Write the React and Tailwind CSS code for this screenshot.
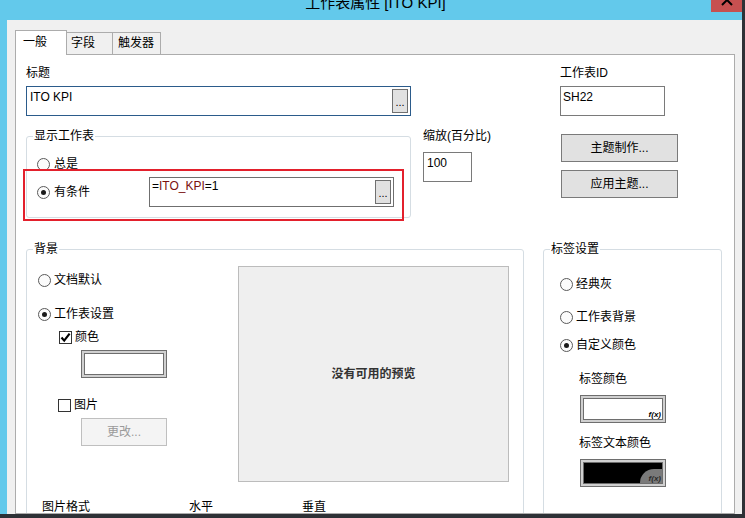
import React from 'react';

const Radio = ({ checked }) => (
  <span className="w-[13px] h-[13px] rounded-full border border-[#5a5a5a] bg-[#fbfbfb] flex items-center justify-center shrink-0">
    {checked && <span className="w-[5px] h-[5px] rounded-full bg-[#1a1a1a]" />}
  </span>
);

const Check = ({ checked }) => (
  <span className="w-[13px] h-[13px] border border-[#333333] bg-white flex items-center justify-center shrink-0">
    {checked && (
      <svg width="11" height="11" viewBox="0 0 11 11">
        <path d="M1.5 5.5 L4.2 8.6 L9.6 1.6" stroke="#000" strokeWidth="2.2" fill="none" />
      </svg>
    )}
  </span>
);

const Dots = ({ className = '' }) => (
  <span className={'w-[16px] h-[24px] bg-[#e1e1e1] border border-[#707070] flex items-end justify-center text-[11px] leading-[14px] pb-[3px] shrink-0 ' + className}>
    ...
  </span>
);

const ColorBox = ({ black, fx }) => (
  <div className="w-[86px] h-[28px] border border-[#6e6e6e] bg-[#d0d0d0] p-[2px]">
    <div className={black ? 'w-full h-full border border-[#6e6e6e] bg-black relative overflow-hidden' : 'w-full h-full border border-[#6e6e6e] bg-white relative overflow-hidden'}>
      {black && <span className="absolute right-0 bottom-0 w-[22px] h-[14px] rounded-tl-[14px] bg-[#7a7a7a]" />}
      {fx && (
        <span className={black ? 'absolute right-[1px] bottom-[-1px] text-[8px] leading-[10px] italic font-bold text-[#2a2a2a]' : 'absolute right-[1px] bottom-[-1px] text-[8px] leading-[10px] italic font-bold text-black'}>f(x)</span>
      )}
    </div>
  </div>
);

export default function App() {
  return (
    <div className="w-[745px] h-[518px] overflow-hidden bg-[#2e3136] font-['Liberation_Sans','Noto_Sans_CJK_SC',sans-serif] text-[12px] leading-[16px] text-black">
      <div className="w-[742px] h-[514px] bg-[#63c9eb] flex flex-col">
        {/* title bar */}
        <div className="h-[20px] flex shrink-0 overflow-hidden">
          <div className="flex-1 flex justify-center pl-[40px]">
            <span className="text-[15px] leading-[20px] -mt-[7px] whitespace-nowrap text-black">工作表属性 [ITO KPI]</span>
          </div>
          <div className="w-[31px] h-[12px] bg-[#c75050] flex justify-center">
            <svg width="14" height="12" viewBox="0 0 14 12">
              <path d="M2 -5 L12 5 M12 -5 L2 5" stroke="#000" strokeWidth="2" fill="none" />
            </svg>
          </div>
        </div>
        {/* body */}
        <div className="flex-1 ml-[7px] bg-[#f0f0f0] pt-[10px] pl-[8px] pr-[7px] flex flex-col overflow-hidden">
          {/* tabs */}
          <div className="flex items-end h-[25px] relative z-10 -mb-px shrink-0">
            <div className="w-[52px] h-[25px] bg-white border border-[#acacac] border-b-0 pl-[7px] pt-[3px]">一般</div>
            <div className="w-[46px] h-[23px] border-t border-r border-b border-[#acacac] pl-[4px] pt-[2px]">字段</div>
            <div className="w-[48px] h-[23px] border-t border-r border-b border-[#acacac] pl-[5px] pt-[2px]">触发器</div>
          </div>
          {/* panel */}
          <div className="flex-1 relative bg-white border border-[#acacac] overflow-hidden">
            {/* top row */}
            <div className="flex pl-[10px] pt-[10px]">
              <div className="w-[386px] flex flex-col">
                <div>标题</div>
                <div className="mt-[5px] w-[385px] h-[30px] border border-[#2b5b8b] flex items-start justify-between pl-[3px] pr-[2px] pt-[2px]">
                  <span>ITO KPI</span>
                  <Dots />
                </div>
                <fieldset className="mt-[12px] w-[385px] border border-[#d5dde3] rounded-[3px] pb-[10px]">
                  <legend className="ml-[6px] px-[1px]">显示工作表</legend>
                  <div className="mt-[12px] pl-[10px] flex items-center gap-[4px] h-[16px]">
                    <Radio />
                    <span>总是</span>
                  </div>
                  <div className="mt-[5px] pl-[10px] flex items-center">
                    <div className="w-[112px] flex items-center gap-[4px]">
                      <Radio checked />
                      <span>有条件</span>
                    </div>
                    <div className="w-[245px] h-[30px] border border-[#6f6f6f] flex items-start justify-between pl-[2px] pr-[2px]">
                      <span>
                        =<span className="text-[#7a1010]">ITO_KPI</span>=1
                      </span>
                      <Dots className="mt-[2px]" />
                    </div>
                  </div>
                </fieldset>
              </div>
              <div className="ml-[11px] w-[137px] mt-[63px] flex flex-col items-start">
                <div>缩放(百分比)</div>
                <div className="mt-[8px] w-[49px] h-[30px] border border-[#7a7a7a] pl-[3px] pt-[2px]">100</div>
              </div>
              <div className="flex flex-col items-start">
                <div>工作表ID</div>
                <div className="mt-[5px] w-[105px] h-[30px] border border-[#7a7a7a] pl-[2px] pt-[2px]">SH22</div>
                <div className="mt-[18px] ml-[1px] w-[117px] h-[28px] bg-[#e1e1e1] border border-[#7a7a7a] flex items-center justify-center">主题制作...</div>
                <div className="mt-[8px] ml-[1px] w-[117px] h-[28px] bg-[#e1e1e1] border border-[#7a7a7a] flex items-center justify-center">应用主题...</div>
              </div>
            </div>

            {/* bottom row */}
            <div className="flex pl-[10px] mt-[23px]">
              <fieldset className="w-[498px] h-[300px] border border-[#d5dde3] rounded-[3px]">
                <legend className="ml-[6px] px-[1px]">背景</legend>
                <div className="flex">
                  <div className="w-[211px] flex flex-col items-start">
                    <div className="mt-[15px] pl-[11px] flex items-center gap-[3px] h-[16px]">
                      <Radio />
                      <span>文档默认</span>
                    </div>
                    <div className="mt-[18px] pl-[11px] flex items-center gap-[3px] h-[16px]">
                      <Radio checked />
                      <span>工作表设置</span>
                    </div>
                    <div className="mt-[7px] pl-[32px] flex items-center gap-[3px] h-[16px]">
                      <Check checked />
                      <span>颜色</span>
                    </div>
                    <div className="mt-[5px] ml-[54px]">
                      <ColorBox />
                    </div>
                    <div className="mt-[19px] pl-[31px] flex items-center gap-[3px] h-[16px]">
                      <Check />
                      <span>图片</span>
                    </div>
                    <div className="mt-[5px] ml-[54px] w-[86px] h-[28px] bg-[#f4f4f4] border border-[#bfbfbf] text-[#9a9a9a] flex items-center justify-center">更改...</div>
                  </div>
                  <div className="mt-[9px] w-[271px] h-[216px] bg-[#efefef] border border-[#bcbcbc] flex items-center justify-center font-bold text-[#333333]">没有可用的预览</div>
                </div>
                <div className="mt-[17px] flex pl-[15px]">
                  <span className="w-[147px]">图片格式</span>
                  <span className="w-[113px]">水平</span>
                  <span>垂直</span>
                </div>
              </fieldset>
              <fieldset className="ml-[19px] w-[179px] h-[300px] border border-[#d5dde3] rounded-[3px]">
                <legend className="ml-[6px] px-[1px]">标签设置</legend>
                <div className="flex flex-col items-start">
                  <div className="mt-[19px] pl-[16px] flex items-center gap-[3px] h-[16px]">
                    <Radio />
                    <span>经典灰</span>
                  </div>
                  <div className="mt-[17px] pl-[16px] flex items-center gap-[3px] h-[16px]">
                    <Radio />
                    <span>工作表背景</span>
                  </div>
                  <div className="mt-[12px] pl-[16px] flex items-center gap-[3px] h-[16px]">
                    <Radio checked />
                    <span>自定义颜色</span>
                  </div>
                  <div className="mt-[18px] pl-[35px]">标签颜色</div>
                  <div className="mt-[8px] ml-[36px]">
                    <ColorBox fx />
                  </div>
                  <div className="mt-[12px] pl-[35px]">标签文本颜色</div>
                  <div className="mt-[8px] ml-[36px]">
                    <ColorBox black fx />
                  </div>
                </div>
              </fieldset>
            </div>

            {/* red highlight annotation */}
            <div className="absolute left-[7px] top-[114px] w-[381px] h-[52px] border-2 border-[#e3202c] pointer-events-none" />
          </div>
        </div>
      </div>
    </div>
  );
}
